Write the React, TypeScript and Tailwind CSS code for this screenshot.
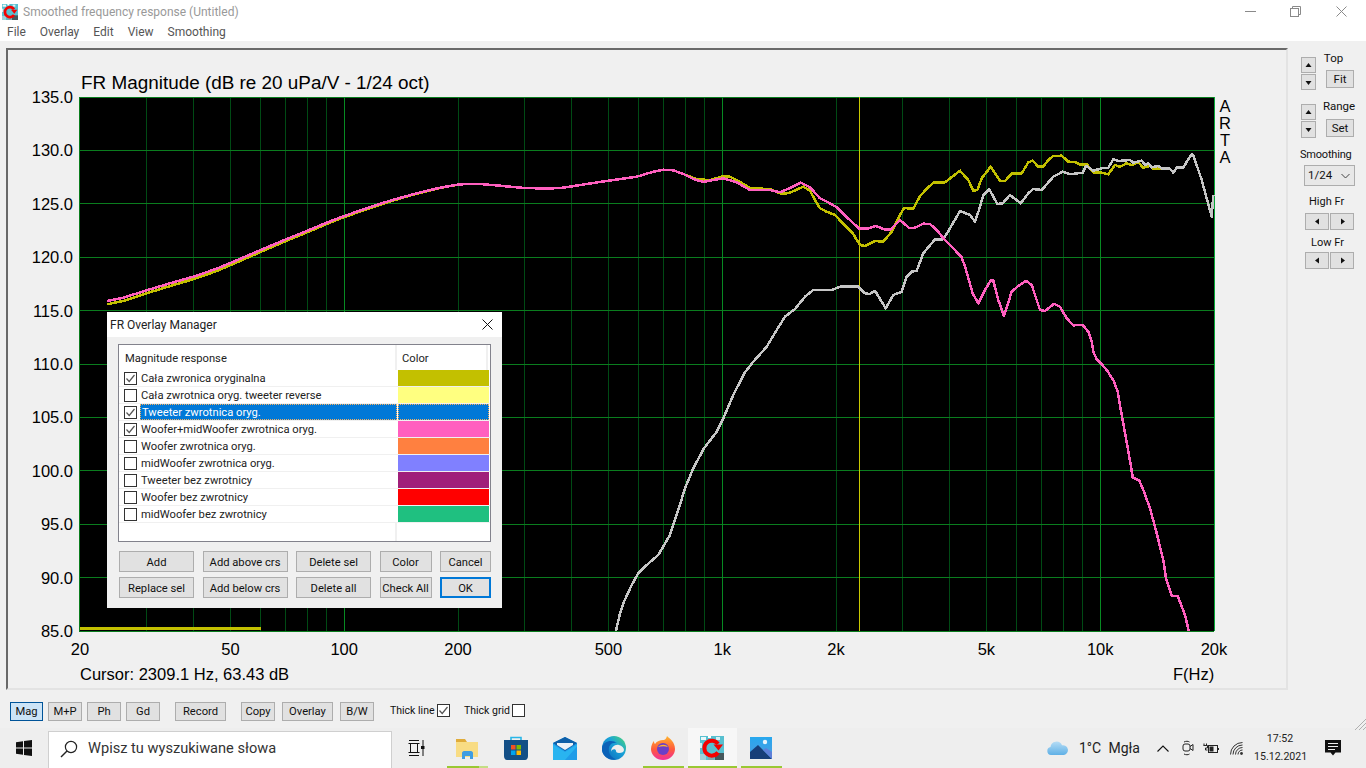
import React from "react";

type P = [number, number];

const leftShared: P[] = [[106.7,301],[123.3,297.7],[146.7,290.3],[173.3,282.3],[193.3,276.7],[216.7,268.7],[233.3,261.7],[260,250.3],[286.7,239],[306.7,231],[326.7,222.7],[343.3,216.3],[366.7,208.3],[390,200.7],[416.7,193.3],[440,187.7],[460,184.3],[480,184],[500,185.7],[520,187.7],[546.7,188.7],[563.3,187.7],[586.7,184],[613.3,180],[636.7,176.7],[653.3,171.7],[663.3,169.7],[673.3,170.3]];

const pink: P[] = [...leftShared,[683.3,174],[693.3,179],[703.3,182],[713.3,180],[723.3,178.3],[736.7,182.3],[750,190],[770,190],[780,192.3],[790,188],[800.7,182.7],[810,187.3],[820,198.3],[828,202.3],[836.7,207.3],[848,218.3],[859.3,228.7],[867.3,228.7],[876,226],[885,229.7],[891,229.3],[900,220],[909.3,228],[915,227.7],[923.3,223.7],[930,224],[936.7,230],[945,240],[953.3,248.3],[961.7,257.3],[965,266.7],[972.7,293.3],[978.3,303.3],[985,290],[990.7,280.7],[993.3,280.7],[998.3,300],[1004,316],[1011.7,291.7],[1018.3,286],[1026,280.7],[1031.7,285],[1040,310],[1045,311],[1054,303.7],[1060,306.7],[1066.7,318.3],[1073.3,325.3],[1082.7,325],[1088.3,331.7],[1091.7,341.7],[1093.3,351.7],[1096.7,359.3],[1101.7,364.3],[1106.7,370],[1113.3,380],[1117.7,391.7],[1121.7,415],[1126,438.3],[1131,466.7],[1132.7,477.3],[1139.3,480.7],[1143.3,490],[1150,508.3],[1156.7,533.3],[1163.3,560],[1166,578.3],[1171.7,596],[1177.7,596],[1185,615],[1188.7,630.7]];

const yellow: P[] = [...leftShared.map(([x, y]): P => [x, y + (x < 460 ? 3.4 * (460 - x) / 354 : 0)]),[686.7,175.3],[696.7,179.3],[710,180],[723.3,176.3],[730,176.7],[740,181.7],[750,188.3],[770,189],[781.7,194],[790,192.7],[803.3,186.7],[810,190.7],[815,200],[820,208.3],[826.7,211.7],[835,215],[846.7,227.3],[852.7,233.3],[860,245],[865,246],[875,241],[883.3,241.7],[891.7,231.7],[897.3,220],[904,208],[913.3,208.7],[920,196],[928.3,187.3],[934,182.3],[945,182.3],[960,170.7],[968.3,180],[973.3,190.7],[977.3,190],[981.7,178.3],[990.7,166.7],[1000,180.7],[1005,181],[1011.7,173.7],[1021.7,173.3],[1028.3,162.3],[1032.7,160.7],[1038.3,166.7],[1043.3,166.7],[1048.3,160],[1053.3,156],[1061.7,155.7],[1068.3,161.7],[1075,162],[1080,164.7],[1086.7,164.3],[1094,172.7],[1100,172.3],[1108.3,174.3],[1115,165],[1120,166.7],[1126.7,163.3],[1131.7,165],[1138.3,162.3],[1143.3,167.7],[1150,166],[1153,169],[1161.7,168.3],[1170,169]];

const gray: P[] = [[616,630.7],[620,613.3],[624,601.7],[631.7,585],[638.3,573.3],[646.7,565],[658.3,555],[670,535],[678.3,510],[685,488.3],[693.3,468.3],[704,448.3],[716.7,431.7],[723.3,418.3],[733.3,395],[744.3,373.3],[753.3,361.7],[766.7,346.7],[776.7,330],[785,316.7],[795,309],[805,296.7],[813.3,290],[831.7,290],[840,286.7],[858.3,286.7],[865,293.3],[870,294],[875,290.7],[885.7,308.3],[893.3,295],[901.7,291.7],[906.7,276.7],[911.7,271.7],[916.7,270.7],[923.3,253.3],[935,239.3],[943.3,239.3],[950,228.3],[960,211],[970,215],[975,221.7],[979,210],[983.3,195],[989.3,189.3],[997.3,204],[1002.7,203.3],[1010,195],[1020.7,203.3],[1028.3,193.3],[1033.3,189],[1041.7,190],[1053.3,176.7],[1062.7,171.7],[1070,174.3],[1082.7,172.7],[1086,166],[1093.3,170.7],[1101.7,168.3],[1108.3,167.7],[1113.3,159.3],[1118.3,161],[1130,160],[1133.3,162.7],[1141.7,160.7],[1145,165],[1148.3,163.3],[1151.7,167.3],[1158.3,166],[1161.7,168.3],[1170,168.7],[1173.3,172.7],[1176.7,167.7],[1183.3,167.7],[1186.7,161.7],[1191.7,154.3],[1193.3,155],[1201.7,180],[1206.7,198.3],[1211.7,216.7],[1213.3,195]];

const pts = (a: P[]) => a.map((p) => p.join(",")).join(" ");
const fx = (f: number) => Math.floor(80 + 378 * Math.log10(f / 20)) + 0.5;

const minorF = [30,40,50,60,70,80,90,200,300,400,500,600,700,800,900,2000,3000,4000,5000,6000,7000,8000,9000];
const majorF = [100,1000,10000];
const yLabels = ["135.0","130.0","125.0","120.0","115.0","110.0","105.0","100.0","95.0","90.0","85.0"];
const xLabels: [string, number][] = [["20",20],["50",50],["100",100],["200",200],["500",500],["1k",1000],["2k",2000],["5k",5000],["10k",10000],["20k",20000]];

function Chart() {
  return (
    <svg className="block w-[1278px] h-[638px]" viewBox="8 50 1278 638" style={{ fontFamily: '"Liberation Sans", Arial, sans-serif' }}>
      <text x={81} y={88.5} fontSize={18.9} fill="#000">FR Magnitude (dB re 20 uPa/V - 1/24 oct)</text>
      <rect x={79} y={97} width={1135} height={534} fill="#000" />
      <g shapeRendering="crispEdges" strokeWidth={1}>
        {minorF.map((f) => <line key={f} x1={fx(f)} x2={fx(f)} y1={97} y2={631} stroke="#004a14" />)}
        {yLabels.map((_, i) => { const y = Math.floor(97 + i * 53.4) + 0.5; return <line key={i} x1={79} x2={1214} y1={y} y2={y} stroke="#0a7d1e" />; })}
        {majorF.map((f) => <line key={f} x1={fx(f)} x2={fx(f)} y1={97} y2={631} stroke="#078a22" />)}
        <line x1={79.5} x2={79.5} y1={97} y2={631} stroke="#0a7d1e" />
        <line x1={1214.5} x2={1214.5} y1={97} y2={631} stroke="#08a838" />
        <line x1={859.5} x2={859.5} y1={97} y2={631} stroke="#c8c800" />
      </g>
      <g fill="none" strokeWidth={2.5} strokeLinejoin="round" shapeRendering="crispEdges">
        <line x1={80} x2={261} y1={628.5} y2={628.5} stroke="#c3c000" strokeWidth={3} />
        <polyline points={pts(yellow)} stroke="#c3c000" />
        <polyline points={pts(gray)} stroke="#c6c6c6" />
        <polyline points={pts(pink)} stroke="#ff5fbf" />
      </g>
      <g fontSize={16.5} fill="#000">
        {yLabels.map((l, i) => <text key={l} x={73} y={103 + i * 53.4} textAnchor="end">{l}</text>)}
        {xLabels.map(([l, f]) => <text key={l} x={80 + 378 * Math.log10(f / 20)} y={655} textAnchor="middle">{l}</text>)}
        <text x={80} y={680}>Cursor: 2309.1 Hz, 63.43 dB</text>
        <text x={1173} y={680}>F(Hz)</text>
        <text x={1225} y={112} textAnchor="middle">A</text>
        <text x={1225} y={129} textAnchor="middle">R</text>
        <text x={1225} y={146} textAnchor="middle">T</text>
        <text x={1225} y={163} textAnchor="middle">A</text>
      </g>
    </svg>
  );
}

function ArtaIcon({ size }: { size: number }) {
  return (
    <svg width={size} height={size} viewBox="0 0 24 24" className="block">
      <rect width="24" height="24" fill="#58c0d0" />
      <rect x="1" y="1" width="5" height="3" fill="#eaf8fa" />
      <rect x="8" y="0" width="3" height="2" fill="#fff" />
      <rect x="16" y="1" width="4" height="3" fill="#d8f0f4" />
      <rect x="0" y="7" width="2" height="5" fill="#d8f0f4" />
      <rect x="0" y="18" width="6" height="6" fill="#9fd0d8" />
      <rect x="8" y="21" width="6" height="3" fill="#7fa8ae" />
      <rect x="15" y="17" width="9" height="7" fill="#46585c" />
      <path d="M18 7.800A7.500 7.500 0 1 0 18 16.500" fill="none" stroke="#f40000" strokeWidth="4" />
      <path d="M13.500 8.500h9.500l-4.500 6z" fill="#f40000" />
    </svg>
  );
}

const Tri = ({ d }: { d: "u" | "d" | "l" | "r" }) => (
  <svg width="7" height="7" viewBox="0 0 7 7" className="block">
    <polygon fill="#111" points={d === "u" ? "3.5,1 0.5,5 6.5,5" : d === "d" ? "0.5,2 6.5,2 3.5,6" : d === "l" ? "5,0.5 5,6.5 1,3.5" : "2,0.5 2,6.5 6,3.5"} />
  </svg>
);

const btn = "flex items-center justify-center bg-[#e1e1e1] border border-[#adadad] text-[#111] leading-none";

function Check({ on }: { on?: boolean }) {
  return (
    <span className="w-[13px] h-[13px] shrink-0 border border-[#333] bg-white flex items-center justify-center">
      {on && (
        <svg width="11" height="11" viewBox="0 0 11 11" className="block">
          <path d="M1.5 5.500 4.200 8.500 9.500 2" fill="none" stroke="#555" strokeWidth="1.2" />
        </svg>
      )}
    </span>
  );
}

const rows: [string, string, boolean][] = [
  ["Cała zwronica oryginalna", "#c3c000", true],
  ["Cała zwrotnica oryg. tweeter reverse", "#ffff80", false],
  ["Tweeter zwrotnica oryg.", "#0078d7", true],
  ["Woofer+midWoofer zwrotnica oryg.", "#ff5fbf", true],
  ["Woofer zwrotnica oryg.", "#ff8040", false],
  ["midWoofer zwrotnica oryg.", "#8080ff", false],
  ["Tweeter bez zwrotnicy", "#a01f7a", false],
  ["Woofer bez zwrotnicy", "#ff0000", false],
  ["midWoofer bez zwrotnicy", "#1fc080", false],
];

function OverlayDialog() {
  return (
    <div className="absolute left-[107px] top-[312px] w-[395px] h-[296px] bg-[#f0f0f0] flex flex-col text-[11.2px]">
      <div className="h-[25px] bg-white flex items-center justify-between pl-[3px] pr-[9px] text-[#222] text-[12px]">
        <span>FR Overlay Manager</span>
        <svg width="11" height="11" viewBox="0 0 11 11" className="block"><path d="M.5.5l10 10M10.500.5l-10 10" stroke="#111" strokeWidth="1" /></svg>
      </div>
      <div className="mx-[11px] mt-[7px] h-[198px] border border-[#82828c] bg-white flex flex-col">
        <div className="h-[25px] flex shrink-0 text-[#222]">
          <span className="w-[278px] border-r-2 border-[#f0f0f0] pl-[6px] pt-[4px] flex items-center">Magnitude response</span>
          <span className="w-[91px] border-r-2 border-[#f0f0f0] pl-[5px] pt-[4px] flex items-center">Color</span>
        </div>
        {rows.map(([label, color, on], i) => {
          const sel = i === 2;
          return (
            <div key={label} className="h-[17px] shrink-0 flex border-b border-[#f0f0f0]">
              <span className="w-[21px] pl-[5px] flex items-center shrink-0"><Check on={on} /></span>
              <span className={sel ? "w-[257px] bg-[#0078d7] text-white pl-[1px] pt-[2px] flex items-center whitespace-nowrap border border-dotted border-[#f5b060]" : "w-[257px] text-[#222] pl-[1px] pt-[3px] flex items-center whitespace-nowrap"}>{label}</span>
              <span className="w-[1px] bg-white" />
              <span className={sel ? "w-[91px] border border-dotted border-[#f5b060]" : "w-[91px]"} style={{ backgroundColor: color }} />
            </div>
          );
        })}
        <div className="flex-1 flex">
          <span className="w-[278px] border-r-2 border-[#f0f0f0]" />
        </div>
      </div>
      <div className="ml-[12px] mt-[9px] w-[372px] grid grid-cols-[75px_85px_75px_52px_51px] gap-x-[8.5px] gap-y-[5px] auto-rows-[21px]">
        {["Add","Add above crs","Delete sel","Color","Cancel","Replace sel","Add below crs","Delete all","Check All"].map((t) => (
          <div key={t} className={`${btn} pt-[2px]`}>{t}</div>
        ))}
        <div className="flex items-center justify-center bg-[#e1e1e1] border-2 border-[#0078d7] text-[#111] leading-none pt-[2px]">OK</div>
      </div>
    </div>
  );
}

function SidePanel() {
  return (
    <div className="w-[78px] shrink-0 text-[11.5px] text-[#111] leading-none">
      <div className="flex ml-[13px] mt-[16px]">
        <div className="flex flex-col gap-[1px] w-[15px]">
          <div className={`${btn} h-[16px]`}><Tri d="u" /></div>
          <div className={`${btn} h-[16px]`}><Tri d="d" /></div>
        </div>
        <div className="ml-[10px] w-[28px] flex flex-col items-center mt-[-5px]">
          <span className="h-[13px] mb-[5px] mr-[13px] flex items-center whitespace-nowrap">Top</span>
          <div className={`${btn} w-[28px] h-[18px] pt-[1px]`}>Fit</div>
        </div>
      </div>
      <div className="flex ml-[13px] mt-[14px]">
        <div className="flex flex-col gap-[1px] w-[15px]">
          <div className={`${btn} h-[16px]`}><Tri d="u" /></div>
          <div className={`${btn} h-[17px]`}><Tri d="d" /></div>
        </div>
        <div className="ml-[10px] w-[28px] flex flex-col items-center mt-[-4px]">
          <span className="h-[13px] mb-[6px] mr-[2px] pt-[1px] flex items-center whitespace-nowrap">Range</span>
          <div className={`${btn} h-[18px] w-[28px] pt-[1px]`}>Set</div>
        </div>
      </div>
      <div className="ml-[12px] mt-[10px] h-[13px] flex items-center whitespace-nowrap text-[11px] tracking-[-0.2px]">Smoothing</div>
      <div className="ml-[16px] mt-[4px] w-[51px] h-[21px] bg-[#e8e8e8] border border-[#adadad] flex items-center justify-between pl-[3px] pr-[4px]">
        <span>1/24</span>
        <svg width="9" height="6" viewBox="0 0 9 6" className="block"><path d="M.5 1l4 4 4-4" fill="none" stroke="#444" /></svg>
      </div>
      <div className="mt-[9px] h-[13px] ml-[21px] flex items-center whitespace-nowrap text-[11px]">High Fr</div>
      <div className="ml-[17px] mt-[5px] flex gap-[1px]">
        <div className={`${btn} w-[24px] h-[17px]`}><Tri d="l" /></div>
        <div className={`${btn} w-[24px] h-[17px]`}><Tri d="r" /></div>
      </div>
      <div className="mt-[6px] h-[13px] ml-[23px] flex items-center whitespace-nowrap text-[11px]">Low Fr</div>
      <div className="ml-[17px] mt-[3px] flex gap-[1px]">
        <div className={`${btn} w-[24px] h-[17px]`}><Tri d="l" /></div>
        <div className={`${btn} w-[24px] h-[17px]`}><Tri d="r" /></div>
      </div>
    </div>
  );
}

function Toolbar() {
  return (
    <div className="h-[38px] pt-[12px] pl-[10px] flex items-start text-[11.2px] text-[#111]">
      <div className="flex items-center justify-center w-[33px] h-[19px] pt-[2px] bg-[#cce4f7] border border-[#005499]">Mag</div>
      <div className={`${btn} w-[34px] h-[19px] pt-[1px] ml-[5px]`}>M+P</div>
      <div className={`${btn} w-[34px] h-[19px] pt-[1px] ml-[5px]`}>Ph</div>
      <div className={`${btn} w-[34px] h-[19px] pt-[1px] ml-[5px]`}>Gd</div>
      <div className={`${btn} w-[51px] h-[19px] pt-[1px] ml-[15px]`}>Record</div>
      <div className={`${btn} w-[34px] h-[19px] pt-[1px] ml-[15px]`}>Copy</div>
      <div className={`${btn} w-[51px] h-[19px] pt-[1px] ml-[7px]`}>Overlay</div>
      <div className={`${btn} w-[34px] h-[19px] pt-[1px] ml-[7px]`}>B/W</div>
      <span className="ml-[16px] w-[43px] whitespace-nowrap h-[17px] flex items-center text-[10.5px]">Thick line</span>
      <span className="ml-[4px] h-[17px] flex items-center"><Check on /></span>
      <span className="ml-[14px] w-[45px] whitespace-nowrap h-[17px] flex items-center text-[10.5px]">Thick grid</span>
      <span className="ml-[3px] h-[17px] flex items-center"><Check /></span>
    </div>
  );
}

const Cell = ({ children, bar, active }: { children: React.ReactNode; bar?: React.ReactNode; active?: boolean }) => (
  <div className={active ? "relative w-[49px] h-[40px] bg-[#f7f7f7] flex items-center justify-center" : "relative w-[49px] h-[40px] flex items-center justify-center"}>
    {children}
    {bar}
  </div>
);

const Underline = () => <span className="absolute left-[4px] right-[4px] bottom-0 h-[2px] bg-[#9ac833]" />;

function Taskbar() {
  return (
    <div className="h-[40px] bg-[#eeeeee] flex items-stretch relative shrink-0">
      <div className="w-[48px] flex items-center justify-center pb-[1px]">
        <svg width="16" height="16" viewBox="0 0 16 16" className="block"><path fill="#111" d="M0 2.200 7 1.200v6.400H0zM8 1 16 0v7.600H8zM0 8.400h7v6.400L0 13.800zM8 8.400h8V16l-8-1z" /></svg>
      </div>
      <div className="w-[344px] mt-[3px] bg-white border border-[#cfcfcf] border-b-0 flex items-center pl-[11px] pb-[2px] text-[14.6px] text-[#333]">
        <svg width="18" height="18" viewBox="0 0 18 18" className="block"><circle cx="11" cy="7" r="5.600" fill="none" stroke="#222" strokeWidth="1.2" /><path d="M7 11 1 17" stroke="#222" strokeWidth="1.4" /></svg>
        <span className="ml-[10px] whitespace-nowrap">Wpisz tu wyszukiwane słowa</span>
      </div>
      <div className="w-[48px] flex items-center justify-center">
        <svg width="17" height="16" viewBox="0 0 17 16" className="block" fill="none" stroke="#111" strokeWidth="1"><path d="M1 .5h10M1 15.500h10M2.500 3.500h7v9h-7zM.5 12.500h11M.5 3.500h11M15 0v6M15 9v7" /><rect x="13" y="6" width="3.500" height="3" fill="#111" stroke="none" /></svg>
      </div>
      <div className="w-[2.5px]" />
      <Cell bar={<><span className="absolute left-[4px] w-[32px] bottom-0 h-[2px] bg-[#9ac833]" /><span className="absolute left-[36px] w-[9px] bottom-0 h-[2px] bg-[#c4de85]" /></>}>
        <svg width="23" height="23" viewBox="0 0 23 23" className="block"><path d="M0 2h9l2 3h-11z" fill="#e0ac3a" /><rect y="5" width="22" height="15" fill="#f8dc84" /><path d="M6 22v-6c0-1 1-2 2-2h7c1 0 2 1 2 2v6h-3v-3H9v3z" fill="#3f9de2" /></svg>
      </Cell>
      <Cell>
        <svg width="24" height="24" viewBox="0 0 24 24" className="block"><path d="M7 5V1.500h10V5" fill="none" stroke="#29b6e8" strokeWidth="1.6" /><path d="M0 4h24v16c0 2-1 4-3 4H3c-2 0-3-2-3-4z" fill="#134f86" /><rect x="7" y="9" width="4.500" height="4.500" fill="#f25022" /><rect x="12.500" y="9" width="4.500" height="4.500" fill="#7fba00" /><rect x="7" y="14.500" width="4.500" height="4.500" fill="#00a4ef" /><rect x="12.500" y="14.500" width="4.500" height="4.500" fill="#ffb900" /></svg>
      </Cell>
      <Cell>
        <svg width="24" height="23" viewBox="0 0 24 23" className="block"><path d="M0 6 12 0l12 6v17H0z" fill="#1f9ce8" /><path d="M0 6 12 0l12 6-12 8z" fill="#0f5fa8" /><path d="M0 7.500 12 15l12-7.500v2L12 23H0z" fill="#29b4f0" /><path d="M4 6h16v2l-8 5-8-5z" fill="#fff" opacity=".92" /></svg>
      </Cell>
      <Cell>
        <svg width="24" height="24" viewBox="0 0 24 24" className="block">
          <defs><linearGradient id="eg" x1="0" y1="1" x2="1" y2="0"><stop offset="0" stopColor="#0b5fb8" /><stop offset=".6" stopColor="#1aa3d8" /><stop offset="1" stopColor="#4fdb6c" /></linearGradient></defs>
          <circle cx="12" cy="12" r="12" fill="url(#eg)" />
          <path d="M9 16c0-5 4-8 8-7 3 .7 5 3 5 5 0 2-2 3-5 3-2 0-3-1-3-2 0-3-5-2-5 1z" fill="#eeeeee" />
          <path d="M0 12C1 5 10 3 15 7 9 6 6 10 7 16c.6 3 3 6 7 7.500C6 24.500 -1 19 0 12z" fill="#0b62b8" />
        </svg>
      </Cell>
      <Cell bar={<Underline />}>
        <svg width="24" height="24" viewBox="0 0 24 24" className="block">
          <defs><linearGradient id="fg" x1="0" y1="0" x2="0" y2="1"><stop offset="0" stopColor="#ffb52e" /><stop offset=".55" stopColor="#ff5a3c" /><stop offset="1" stopColor="#f0309a" /></linearGradient></defs>
          <path d="M16 0c3 3 8 6 8 13a12 11 0 0 1-24 0C0 9 2 6 3 5c0 1 0 2 1 3 2-3 5-4 8-4 1 0 3 0 4-4z" fill="url(#fg)" />
          <circle cx="12" cy="13" r="6" fill="#6a3fc8" />
          <path d="M7 11c3-3 8-3 10 0-3-1-6-1-10 0z" fill="#ffb52e" />
        </svg>
      </Cell>
      <Cell active bar={<span className="absolute left-0 right-0 bottom-0 h-[2px] bg-[#9ac833]" />}>
        <ArtaIcon size={24} />
      </Cell>
      <Cell bar={<Underline />}>
        <svg width="22" height="22" viewBox="0 0 22 22" className="block">
          <defs><linearGradient id="pg" x1="0" y1="0" x2="0" y2="1"><stop offset="0" stopColor="#27a8ee" /><stop offset="1" stopColor="#4f9be0" /></linearGradient></defs>
          <rect width="22" height="22" fill="url(#pg)" />
          <circle cx="15" cy="5" r="2.200" fill="#e8f4fc" />
          <path d="M0 22v-7l8-7 14 14z" fill="#173e78" />
          <path d="M13 13l3-2 6 4v7z" fill="#5e7fd8" />
        </svg>
      </Cell>
      <div className="flex-1" />
      <div className="w-[319px] flex items-center text-[#222] shrink-0">
        <svg width="22" height="14" viewBox="0 0 22 14" className="block shrink-0">
          <defs><linearGradient id="cl" x1="0" y1="0" x2="0" y2="1"><stop offset="0" stopColor="#b5dcf5" /><stop offset="1" stopColor="#5fb0e6" /></linearGradient></defs>
          <path d="M4 14a4 4 0 0 1-.5-7.900A6 6 0 0 1 15 4.300 4.900 4.900 0 0 1 17 14z" fill="url(#cl)" />
        </svg>
        <span className="ml-[10px] w-[61px] text-[14px] whitespace-nowrap flex justify-between"><span>1°C</span><span>Mgła</span></span>
        <svg width="12" height="7" viewBox="0 0 12 7" className="ml-[17px] block shrink-0"><path d="M.5 6.500 6 1l5.500 5.500" fill="none" stroke="#111" strokeWidth="1.1" /></svg>
        <svg width="12" height="16" viewBox="0 0 12 16" className="ml-[13px] block shrink-0" fill="none" stroke="#222" strokeWidth="1"><rect x="1" y="4" width="7" height="7" rx="2" /><path d="M8 6.500l3-2v6l-3-2M2 2c2-1 4-1 5.500 0M2 14c2 1 4 1 5.500 0" /></svg>
        <svg width="16" height="11" viewBox="0 0 16 11" className="ml-[9px] block shrink-0" fill="none" stroke="#222" strokeWidth="1"><path d="M1 .5v2M3.500.5v2M.5 2.500h4V5H2.500v2H4.500" /><rect x="5.500" y="2.500" width="9" height="7" /><rect x="6.500" y="3.500" width="4" height="5" fill="#222" stroke="none" /><path d="M15.500 5v2" /></svg>
        <svg width="13" height="13" viewBox="0 0 13 13" className="ml-[11px] block shrink-0" fill="none" stroke="#333" strokeWidth="1"><path d="M.5 12.500A12 12 0 0 1 12.500.5M3 12.500A9.500 9.500 0 0 1 12.500 3M5.500 12.500A7 7 0 0 1 12.500 5.500M8 12.500A4.500 4.500 0 0 1 12.500 8" /><circle cx="11.500" cy="11.500" r="1.400" fill="#333" stroke="none" /></svg>
        <div className="ml-[11px] w-[52px] shrink-0 text-center text-[10.6px] leading-[18px] whitespace-nowrap"><div>17:52</div><div>15.12.2021</div></div>
        <svg width="16" height="16" viewBox="0 0 16 16" className="ml-[19px] block shrink-0"><path d="M0 0h16v12.500h-5.500L8 15.500l-2.500-3H0z" fill="#111" /><path d="M3 3.500h10M3 6.500h10M3 9.500h7" stroke="#eee" strokeWidth="1" /></svg>
      </div>
    </div>
  );
}

export default function App() {
  return (
    <div className="relative w-[1366px] h-[768px] overflow-hidden bg-[#f0f0f0] flex flex-col font-['Roboto',sans-serif]">
      <div className="bg-white h-[41px] shrink-0 flex flex-col">
        <div className="h-[23px] flex items-center relative">
          <span className="ml-[2px]"><ArtaIcon size={16} /></span>
          <span className="ml-[5px] pt-[1px] text-[12px] text-[#999999] whitespace-nowrap">Smoothed frequency response (Untitled)</span>
          <div className="ml-auto flex items-center">
            <svg width="11" height="11" viewBox="0 0 11 11" className="block"><path d="M0 5.500h11" stroke="#8a8a8a" /></svg>
            <svg width="11" height="11" viewBox="0 0 11 11" className="block ml-[34px]" fill="none" stroke="#8a8a8a"><path d="M2.500 2.500V.5h8v8h-2" /><rect x=".5" y="2.500" width="8" height="8" /></svg>
            <svg width="11" height="11" viewBox="0 0 11 11" className="block ml-[35px] mr-[19px]"><path d="M.5.5l10 10M10.500.5l-10 10" stroke="#8a8a8a" /></svg>
          </div>
        </div>
        <div className="h-[18px] flex items-center gap-[14px] pl-[7px] text-[12px] text-[#555]">
          <span>File</span><span>Overlay</span><span>Edit</span><span>View</span><span>Smoothing</span>
        </div>
      </div>
      <div className="flex h-[649px] shrink-0">
        <div className="w-[1288px] pl-[6px] pt-[7px] shrink-0">
          <div className="w-[1282px] h-[642px] border-t-2 border-l-2 border-t-[#696969] border-l-[#696969] border-r-2 border-b-2 border-r-[#e3e3e3] border-b-[#e3e3e3]">
            <Chart />
          </div>
        </div>
        <SidePanel />
      </div>
      <Toolbar />
      <Taskbar />
      <OverlayDialog />
      <svg width="11" height="12" viewBox="0 0 11 12" className="absolute right-0 top-[718px]"><path d="M11 1 0 12M11 5 4 12M11 9 8 12" stroke="#b0b0b0" /></svg>
    </div>
  );
}
